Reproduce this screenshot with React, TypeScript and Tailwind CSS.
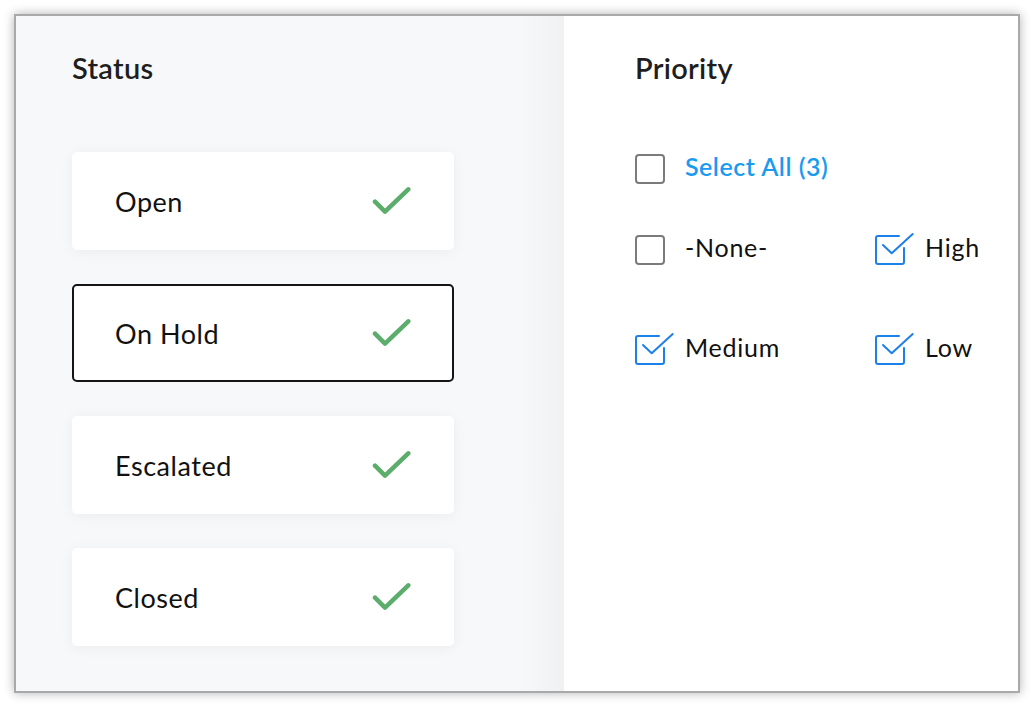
const STATUSES = ["Open", "On Hold", "Escalated", "Closed"];

function GreenCheck() {
  return (
    <svg width="40" height="30" viewBox="0 0 40 30" fill="none">
      <path
        d="M3 15.7 L13 25.7 L36.3 3.3"
        stroke="#5cad6b"
        strokeWidth="4.5"
        strokeLinecap="round"
        strokeLinejoin="round"
      />
    </svg>
  );
}

function Box({ checked }: { checked?: boolean }) {
  if (!checked) {
    return <div className="w-[30px] h-[30px] shrink-0 rounded-[4px] border-2 border-[#7b7b7b] bg-white" />;
  }
  return (
    <svg width="30" height="30" viewBox="0 0 30 30" fill="none" overflow="visible" className="shrink-0">
      <path
        d="M29 13 V27 a2 2 0 0 1 -2 2 H3 a2 2 0 0 1 -2 -2 V3 a2 2 0 0 1 2 -2 H24"
        stroke="#1d80e8"
        strokeWidth="2"
        strokeLinecap="round"
      />
      <path
        d="M8 10 L16.7 18.3 L37.7 -1"
        stroke="#1d80e8"
        strokeWidth="2"
        strokeLinecap="round"
        strokeLinejoin="round"
      />
    </svg>
  );
}

function Option({ label, checked }: { label: string; checked?: boolean }) {
  return (
    <div className="flex items-center gap-5 h-[30px]">
      <Box checked={checked} />
      <span className="text-[25px] leading-none tracking-[0.03em] text-[#111] pb-[6px]">{label}</span>
    </div>
  );
}

export default function App() {
  return (
    <div className="w-[1034px] h-[708px] bg-white p-[14px] font-['Lato',sans-serif]">
      <div className="w-[1006px] h-[679px] border-2 border-[#a9a9a9] shadow-[0_0_10px_rgba(0,0,0,0.3)] flex bg-white">
        {/* Status column */}
        <div className="w-[548px] h-full bg-gradient-to-r from-[#f7f8fa] from-92% to-[#f0f1f3] pl-[56px] pt-[34px]">
          <h2 className="text-[29px] leading-[35px] font-semibold tracking-[0.01em] text-[#1e1e1e]">Status</h2>
          <div className="mt-[67px] flex flex-col gap-[34px] w-[382px]">
            {STATUSES.map((s) => (
              <div
                key={s}
                className={`h-[98px] rounded-[5px] bg-white border-2 flex items-center justify-between pl-[41px] pr-[40px] ${
                  s === "On Hold"
                    ? "border-[#151515]"
                    : "border-transparent shadow-[0_2px_14px_rgba(0,0,0,0.05)]"
                }`}
              >
                <span className="text-[27px] leading-none tracking-[0.02em] text-[#111] pt-[1px]">{s}</span>
                <GreenCheck />
              </div>
            ))}
          </div>
        </div>

        {/* Priority column */}
        <div className="flex-1 h-full pl-[71px] pt-[34px]">
          <h2 className="text-[29px] leading-[35px] font-semibold tracking-[0.01em] text-[#1e1e1e]">Priority</h2>
          <div className="mt-[69px] flex items-center gap-5 h-[30px]">
            <Box />
            <span className="text-[25px] leading-none font-semibold tracking-[0.02em] text-[#1a9bf0] pb-[6px]">Select All (3)</span>
          </div>
          <div className="mt-[51px] grid grid-cols-[240px_1fr] gap-y-[70px]">
            <Option label="-None-" />
            <Option label="High" checked />
            <Option label="Medium" checked />
            <Option label="Low" checked />
          </div>
        </div>
      </div>
    </div>
  );
}
